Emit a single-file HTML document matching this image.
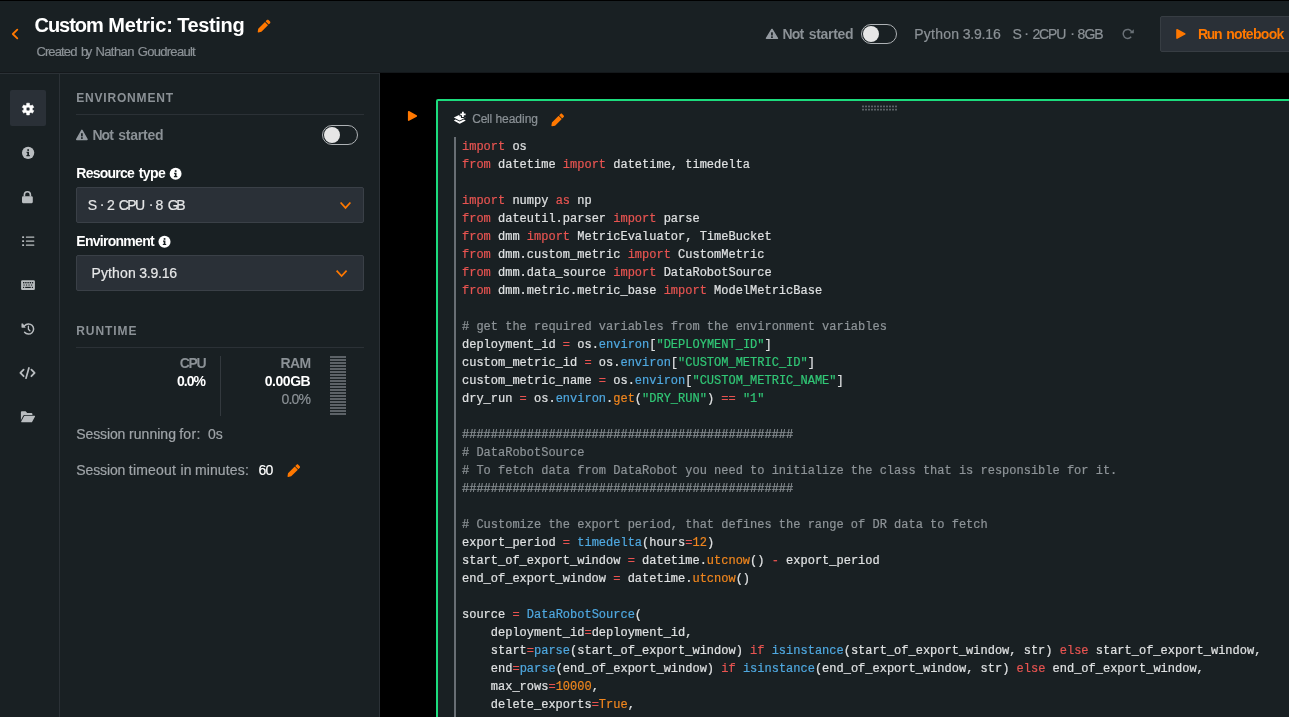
<!DOCTYPE html>
<html><head><meta charset="utf-8"><title>Custom Metric: Testing</title>
<style>
html,body{margin:0;padding:0;}
body{width:1289px;height:717px;overflow:hidden;background:#000;position:relative;font-family:"Liberation Sans", sans-serif;}
.abs{position:absolute;}
.t{position:absolute;white-space:pre;font-family:"Liberation Sans", sans-serif;}
#hdr{left:0;top:0;width:1289px;height:72px;background:#192023;border-top:1px solid #000;box-sizing:border-box;}
#hdrline{left:0;top:72px;width:1289px;height:1px;background:#14181b;}
#side{left:0;top:73px;width:380px;height:644px;background:#192023;border-top:1px solid #2b3136;border-right:1px solid #2b3136;box-sizing:border-box;}
#rail{left:59px;top:73px;width:1px;height:644px;background:#2b3136;}
#active{left:10px;top:90px;width:36px;height:36px;background:#2a3037;border-radius:2px;}
.hr{height:1px;background:#2b3136;left:76px;width:288px;}
.sel{left:76px;width:288px;height:36px;background:#2a3037;border:1px solid #3a4047;border-radius:2px;box-sizing:border-box;}
.tog{width:36px;height:20px;border:1px solid #aeb2b5;border-radius:10px;box-sizing:border-box;}
.tog i{position:absolute;left:1px;top:1px;width:16px;height:16px;border-radius:8px;background:#e6e6e6;}
#runbtn{left:1160px;top:16px;width:140px;height:36px;background:#2a3037;border:1px solid #373d43;border-radius:2px;box-sizing:border-box;}
#cell{left:436px;top:99px;width:900px;height:700px;background:#192023;border:2px solid #1cdc7d;border-radius:2px;box-sizing:border-box;}
#gut{left:454px;top:137px;width:2px;height:600px;background:#686e74;}
#code{left:462px;top:138px;-webkit-text-stroke:0.2px;font-family:"Liberation Mono", monospace;font-size:12px;line-height:18px;color:#dfe1e2;}
.ln{height:18px;white-space:pre;}
.k{color:#e85451;} .s{color:#31c776;} .b{color:#4fa8e0;} .o{color:#f0861e;} .c{color:#8e9498;}
#bars{left:330px;top:356px;width:16px;height:59px;background:repeating-linear-gradient(to bottom,#5c6267 0,#5c6267 2px,transparent 2px,transparent 3px);}
#vsep{left:220px;top:356px;width:1px;height:60px;background:#33393e;}
svg{position:absolute;overflow:visible;}
#wrap{position:absolute;left:0;top:0;width:1289px;height:717px;will-change:transform;}
</style></head><body><div id="wrap">
<div id="hdr" class="abs"></div>
<div id="hdrline" class="abs"></div>
<div id="side" class="abs"></div>
<div id="rail" class="abs"></div>
<div id="active" class="abs"></div>
<div class="abs hr" style="top:114px"></div>
<div class="abs hr" style="top:347px"></div>
<div class="abs sel" style="top:187px"></div>
<div class="abs sel" style="top:255px"></div>
<div class="abs tog" style="left:322px;top:125px"><i></i></div>
<div class="abs tog" style="left:860.5px;top:24px"><i></i></div>
<div id="runbtn" class="abs"></div>
<div id="vsep" class="abs"></div>
<div id="bars" class="abs"></div>
<div id="cell" class="abs"></div>
<div id="gut" class="abs"></div>
<div id="code" class="abs">
<div class="ln"><span class="k">import</span> os</div>
<div class="ln"><span class="k">from</span> datetime <span class="k">import</span> datetime, timedelta</div>
<div class="ln">&nbsp;</div>
<div class="ln"><span class="k">import</span> numpy <span class="k">as</span> np</div>
<div class="ln"><span class="k">from</span> dateutil.parser <span class="k">import</span> parse</div>
<div class="ln"><span class="k">from</span> dmm <span class="k">import</span> MetricEvaluator, TimeBucket</div>
<div class="ln"><span class="k">from</span> dmm.custom_metric <span class="k">import</span> CustomMetric</div>
<div class="ln"><span class="k">from</span> dmm.data_source <span class="k">import</span> DataRobotSource</div>
<div class="ln"><span class="k">from</span> dmm.metric.metric_base <span class="k">import</span> ModelMetricBase</div>
<div class="ln">&nbsp;</div>
<div class="ln"><span class="c"># get the required variables from the environment variables</span></div>
<div class="ln">deployment_id <span class="k">=</span> os.<span class="b">environ</span>[<span class="s">&quot;DEPLOYMENT_ID&quot;</span>]</div>
<div class="ln">custom_metric_id <span class="k">=</span> os.<span class="b">environ</span>[<span class="s">&quot;CUSTOM_METRIC_ID&quot;</span>]</div>
<div class="ln">custom_metric_name <span class="k">=</span> os.<span class="b">environ</span>[<span class="s">&quot;CUSTOM_METRIC_NAME&quot;</span>]</div>
<div class="ln">dry_run <span class="k">=</span> os.<span class="b">environ</span>.<span class="o">get</span>(<span class="s">&quot;DRY_RUN&quot;</span>) <span class="k">==</span> <span class="s">&quot;1&quot;</span></div>
<div class="ln">&nbsp;</div>
<div class="ln"><span class="c">##############################################</span></div>
<div class="ln"><span class="c"># DataRobotSource</span></div>
<div class="ln"><span class="c"># To fetch data from DataRobot you need to initialize the class that is responsible for it.</span></div>
<div class="ln"><span class="c">##############################################</span></div>
<div class="ln">&nbsp;</div>
<div class="ln"><span class="c"># Customize the export period, that defines the range of DR data to fetch</span></div>
<div class="ln">export_period <span class="k">=</span> <span class="b">timedelta</span>(hours<span class="k">=</span><span class="o">12</span>)</div>
<div class="ln">start_of_export_window <span class="k">=</span> datetime.<span class="o">utcnow</span>() <span class="k">-</span> export_period</div>
<div class="ln">end_of_export_window <span class="k">=</span> datetime.<span class="o">utcnow</span>()</div>
<div class="ln">&nbsp;</div>
<div class="ln">source <span class="k">=</span> <span class="b">DataRobotSource</span>(</div>
<div class="ln">    deployment_id<span class="k">=</span>deployment_id,</div>
<div class="ln">    start<span class="k">=</span><span class="b">parse</span>(start_of_export_window) <span class="k">if</span> <span class="b">isinstance</span>(start_of_export_window, str) <span class="k">else</span> start_of_export_window,</div>
<div class="ln">    end<span class="k">=</span><span class="b">parse</span>(end_of_export_window) <span class="k">if</span> <span class="b">isinstance</span>(end_of_export_window, str) <span class="k">else</span> end_of_export_window,</div>
<div class="ln">    max_rows<span class="k">=</span><span class="o">10000</span>,</div>
<div class="ln">    delete_exports<span class="k">=</span><span class="o">True</span>,</div>
<div class="ln">)</div>
<div class="ln">&nbsp;</div>
</div>
<div class="t" style="left:34.50px;top:15px;font-size:20px;line-height:20px;font-weight:bold;color:#ffffff;letter-spacing:-1.052px;">Custom</div>
<div class="t" style="left:108.30px;top:15px;font-size:20px;line-height:20px;font-weight:bold;color:#ffffff;letter-spacing:-0.168px;">Metric:</div>
<div class="t" style="left:177.20px;top:15px;font-size:20px;line-height:20px;font-weight:bold;color:#ffffff;letter-spacing:-0.369px;">Testing</div>
<div class="t" style="left:36.40px;top:45px;font-size:13px;line-height:13px;font-weight:normal;color:#8b9196;letter-spacing:-0.870px;-webkit-text-stroke:0.2px;">Created</div>
<div class="t" style="left:80.90px;top:45px;font-size:13px;line-height:13px;font-weight:normal;color:#8b9196;letter-spacing:-2.430px;-webkit-text-stroke:0.2px;">by</div>
<div class="t" style="left:95.40px;top:45px;font-size:13px;line-height:13px;font-weight:normal;color:#8b9196;letter-spacing:-0.578px;-webkit-text-stroke:0.2px;">Nathan</div>
<div class="t" style="left:137.80px;top:45px;font-size:13px;line-height:13px;font-weight:normal;color:#8b9196;letter-spacing:-0.712px;-webkit-text-stroke:0.2px;">Goudreault</div>
<div class="t" style="left:782.40px;top:27px;font-size:14px;line-height:14px;font-weight:bold;color:#8b9196;letter-spacing:-0.731px;">Not</div>
<div class="t" style="left:808.70px;top:27px;font-size:14px;line-height:14px;font-weight:bold;color:#8b9196;letter-spacing:-0.305px;">started</div>
<div class="t" style="left:914.30px;top:27px;font-size:14px;line-height:14px;font-weight:normal;color:#8b9196;letter-spacing:0.240px;-webkit-text-stroke:0.2px;">Python</div>
<div class="t" style="left:962.70px;top:27px;font-size:14px;line-height:14px;font-weight:normal;color:#8b9196;letter-spacing:-0.188px;-webkit-text-stroke:0.2px;">3.9.16</div>
<div class="t" style="left:1012.60px;top:27px;font-size:14px;line-height:14px;font-weight:normal;color:#8b9196;letter-spacing:0.000px;-webkit-text-stroke:0.2px;">S</div>
<div class="t" style="left:1024.15px;top:26px;font-size:14px;line-height:14px;font-weight:normal;color:#8b9196;letter-spacing:0.000px;-webkit-text-stroke:0.2px;">·</div>
<div class="t" style="left:1032.40px;top:27px;font-size:14px;line-height:14px;font-weight:normal;color:#8b9196;letter-spacing:-1.111px;-webkit-text-stroke:0.2px;">2CPU</div>
<div class="t" style="left:1070.35px;top:26px;font-size:14px;line-height:14px;font-weight:normal;color:#8b9196;letter-spacing:0.000px;-webkit-text-stroke:0.2px;">·</div>
<div class="t" style="left:1077.60px;top:27px;font-size:14px;line-height:14px;font-weight:normal;color:#8b9196;letter-spacing:-0.988px;-webkit-text-stroke:0.2px;">8GB</div>
<div class="t" style="left:1198.00px;top:27px;font-size:14px;line-height:14px;font-weight:bold;color:#ff7800;letter-spacing:-1.281px;">Run</div>
<div class="t" style="left:1226.20px;top:27px;font-size:14px;line-height:14px;font-weight:bold;color:#ff7800;letter-spacing:-0.701px;">notebook</div>
<div class="t" style="left:76.20px;top:92px;font-size:12px;line-height:12px;font-weight:bold;color:#8b9196;letter-spacing:0.816px;">ENVIRONMENT</div>
<div class="t" style="left:92.40px;top:128px;font-size:14px;line-height:14px;font-weight:bold;color:#8b9196;letter-spacing:-0.931px;">Not</div>
<div class="t" style="left:118.30px;top:128px;font-size:14px;line-height:14px;font-weight:bold;color:#8b9196;letter-spacing:-0.238px;">started</div>
<div class="t" style="left:76.30px;top:166px;font-size:14px;line-height:14px;font-weight:bold;color:#ffffff;letter-spacing:-0.760px;">Resource</div>
<div class="t" style="left:138.80px;top:166px;font-size:14px;line-height:14px;font-weight:bold;color:#ffffff;letter-spacing:-0.600px;">type</div>
<div class="t" style="left:87.75px;top:198px;font-size:14px;line-height:14px;font-weight:normal;color:#e6e7e8;letter-spacing:0.000px;-webkit-text-stroke:0.2px;">S</div>
<div class="t" style="left:99.75px;top:197px;font-size:14px;line-height:14px;font-weight:normal;color:#e6e7e8;letter-spacing:0.000px;-webkit-text-stroke:0.2px;">·</div>
<div class="t" style="left:107.00px;top:198px;font-size:14px;line-height:14px;font-weight:normal;color:#e6e7e8;letter-spacing:0.000px;-webkit-text-stroke:0.2px;">2</div>
<div class="t" style="left:118.70px;top:198px;font-size:14px;line-height:14px;font-weight:normal;color:#e6e7e8;letter-spacing:-1.524px;-webkit-text-stroke:0.2px;">CPU</div>
<div class="t" style="left:148.65px;top:197px;font-size:14px;line-height:14px;font-weight:normal;color:#e6e7e8;letter-spacing:0.000px;-webkit-text-stroke:0.2px;">·</div>
<div class="t" style="left:155.55px;top:198px;font-size:14px;line-height:14px;font-weight:normal;color:#e6e7e8;letter-spacing:0.000px;-webkit-text-stroke:0.2px;">8</div>
<div class="t" style="left:167.70px;top:198px;font-size:14px;line-height:14px;font-weight:normal;color:#e6e7e8;letter-spacing:-2.390px;-webkit-text-stroke:0.2px;">GB</div>
<div class="t" style="left:76.30px;top:234px;font-size:14px;line-height:14px;font-weight:bold;color:#ffffff;letter-spacing:-0.720px;">Environment</div>
<div class="t" style="left:91.40px;top:266px;font-size:14px;line-height:14px;font-weight:normal;color:#e6e7e8;letter-spacing:0.160px;-webkit-text-stroke:0.2px;">Python</div>
<div class="t" style="left:139.30px;top:266px;font-size:14px;line-height:14px;font-weight:normal;color:#e6e7e8;letter-spacing:-0.248px;-webkit-text-stroke:0.2px;">3.9.16</div>
<div class="t" style="left:76.20px;top:325px;font-size:12px;line-height:12px;font-weight:bold;color:#8b9196;letter-spacing:0.940px;">RUNTIME</div>
<div class="t" style="left:179.80px;top:356px;font-size:14px;line-height:14px;font-weight:bold;color:#8b9196;letter-spacing:-1.374px;">CPU</div>
<div class="t" style="left:176.90px;top:374px;font-size:14px;line-height:14px;font-weight:bold;color:#ffffff;letter-spacing:-0.954px;">0.0%</div>
<div class="t" style="left:280.60px;top:356px;font-size:14px;line-height:14px;font-weight:bold;color:#8b9196;letter-spacing:-0.610px;">RAM</div>
<div class="t" style="left:264.80px;top:374px;font-size:14px;line-height:14px;font-weight:bold;color:#ffffff;letter-spacing:-0.468px;">0.00GB</div>
<div class="t" style="left:281.50px;top:392px;font-size:14px;line-height:14px;font-weight:normal;color:#8b9196;letter-spacing:-0.787px;-webkit-text-stroke:0.2px;">0.0%</div>
<div class="t" style="left:76.30px;top:427px;font-size:14px;line-height:14px;font-weight:normal;color:#9fa4a8;letter-spacing:-0.120px;-webkit-text-stroke:0.2px;">Session</div>
<div class="t" style="left:129.00px;top:427px;font-size:14px;line-height:14px;font-weight:normal;color:#9fa4a8;letter-spacing:0.047px;-webkit-text-stroke:0.2px;">running</div>
<div class="t" style="left:179.20px;top:427px;font-size:14px;line-height:14px;font-weight:normal;color:#9fa4a8;letter-spacing:0.287px;-webkit-text-stroke:0.2px;">for:</div>
<div class="t" style="left:208.00px;top:427px;font-size:14px;line-height:14px;font-weight:normal;color:#9fa4a8;letter-spacing:0.014px;-webkit-text-stroke:0.2px;">0s</div>
<div class="t" style="left:76.30px;top:463px;font-size:14px;line-height:14px;font-weight:normal;color:#9fa4a8;letter-spacing:-0.120px;-webkit-text-stroke:0.2px;">Session</div>
<div class="t" style="left:128.80px;top:463px;font-size:14px;line-height:14px;font-weight:normal;color:#9fa4a8;letter-spacing:0.213px;-webkit-text-stroke:0.2px;">timeout</div>
<div class="t" style="left:180.50px;top:463px;font-size:14px;line-height:14px;font-weight:normal;color:#9fa4a8;letter-spacing:0.090px;-webkit-text-stroke:0.2px;">in</div>
<div class="t" style="left:194.90px;top:463px;font-size:14px;line-height:14px;font-weight:normal;color:#9fa4a8;letter-spacing:0.140px;-webkit-text-stroke:0.2px;">minutes:</div>
<div class="t" style="left:258.50px;top:463px;font-size:14px;line-height:14px;font-weight:normal;color:#ffffff;letter-spacing:-0.786px;-webkit-text-stroke:0.2px;">60</div>
<div class="t" style="left:472.20px;top:113px;font-size:12px;line-height:12px;font-weight:normal;color:#8b9196;letter-spacing:-0.202px;-webkit-text-stroke:0.2px;">Cell</div>
<div class="t" style="left:495.40px;top:113px;font-size:12px;line-height:12px;font-weight:normal;color:#8b9196;letter-spacing:-0.023px;-webkit-text-stroke:0.2px;">heading</div>
<svg class="abs" style="left:0;top:0" width="1289" height="717" viewBox="0 0 1289 717">
<g transform="translate(257.7 19.7) scale(0.02480)" fill="#ff7800"><path d="M497.9 142.1l-46.1 46.1c-4.7 4.7-12.3 4.7-17 0l-111-111c-4.7-4.7-4.7-12.3 0-17l46.1-46.1c18.7-18.7 49.1-18.7 67.9 0l60.1 60.1c18.8 18.7 18.8 49.1 0 67.900z"/><path d="M284.2 99.8L21.6 362.4 .4 483.9c-2.9 16.4 11.4 30.600 27.800 27.800l121.500-21.300 262.600-262.600c4.700-4.700 4.700-12.300 0-17l-111-111c-4.800-4.700-12.400-4.700-17.100 0z"/></g>
<g transform="translate(287.5 464.3) scale(0.02461)" fill="#ff7800"><path d="M497.9 142.1l-46.1 46.1c-4.7 4.7-12.3 4.7-17 0l-111-111c-4.7-4.7-4.7-12.3 0-17l46.1-46.1c18.7-18.7 49.1-18.7 67.9 0l60.1 60.1c18.8 18.7 18.8 49.1 0 67.900z"/><path d="M284.2 99.8L21.6 362.4 .4 483.9c-2.9 16.4 11.4 30.600 27.800 27.800l121.500-21.300 262.600-262.600c4.700-4.700 4.700-12.300 0-17l-111-111c-4.800-4.700-12.400-4.700-17.100 0z"/></g>
<g transform="translate(551.4 113.6) scale(0.02461)" fill="#ff7800"><path d="M497.9 142.1l-46.1 46.1c-4.7 4.7-12.3 4.7-17 0l-111-111c-4.7-4.7-4.7-12.3 0-17l46.1-46.1c18.7-18.7 49.1-18.7 67.9 0l60.1 60.1c18.8 18.7 18.8 49.1 0 67.900z"/><path d="M284.2 99.8L21.6 362.4 .4 483.9c-2.9 16.4 11.4 30.600 27.800 27.800l121.500-21.300 262.600-262.600c4.700-4.700 4.700-12.300 0-17l-111-111c-4.800-4.700-12.400-4.700-17.100 0z"/></g>
<path d="M17.3 29.6 L12.8 34 L17.3 38.4" fill="none" stroke="#ff7800" stroke-width="1.8" stroke-linecap="round" stroke-linejoin="round"/>
<path d="M771.95 29.5 L777.4000000000001 38.300000000000004 L766.5 38.300000000000004 Z" fill="#949aa0" stroke="#949aa0" stroke-width="1.6" stroke-linejoin="round"/>
<rect x="771.1" y="32.3" width="1.7" height="3.2" fill="#192023"/>
<rect x="771.1" y="36.3" width="1.7" height="1.7" fill="#192023"/>
<path d="M81.9 130.4 L87.0 139.39999999999998 L76.8 139.39999999999998 Z" fill="#949aa0" stroke="#949aa0" stroke-width="1.6" stroke-linejoin="round"/>
<rect x="81.05000000000001" y="133.2" width="1.7" height="3.2" fill="#192023"/>
<rect x="81.05000000000001" y="137.2" width="1.7" height="1.7" fill="#192023"/>
<path d="M1131.67 31.79 A4.5 4.5 0 1 0 1131.15 36.79" fill="none" stroke="#697076" stroke-width="1.5"/>
<path d="M1133.8 29.2 V33.2 H1129.6 Z" fill="#697076"/>
<path d="M1177.0 29.7 L1184.8000000000002 33.9 L1177.0 38.1 Z" fill="#ff7800" stroke="#ff7800" stroke-width="1.6" stroke-linejoin="round"/>
<path d="M408.7 111.80000000000001 L416.29999999999995 115.95 L408.7 120.1 Z" fill="#ff7800" stroke="#ff7800" stroke-width="1.6" stroke-linejoin="round"/>
<path d="M26.72 104.96 L26.68 103.21 L29.42 103.21 L29.38 104.96 L30.93 105.85 L32.42 104.94 L33.79 107.32 L32.26 108.16 L32.26 109.94 L33.79 110.78 L32.42 113.16 L30.93 112.25 L29.38 113.14 L29.42 114.89 L26.68 114.89 L26.72 113.14 L25.17 112.25 L23.68 113.16 L22.31 110.78 L23.84 109.94 L23.84 108.16 L22.31 107.32 L23.68 104.94 L25.17 105.85 Z M26.05 109.05 a2.0 2.0 0 1 0 4.0 0 a2.0 2.0 0 1 0 -4.0 0 Z" fill="#ffffff" fill-rule="evenodd" stroke="#ffffff" stroke-width="0.6" stroke-linejoin="round"/>
<circle cx="28.1" cy="152.8" r="6.15" fill="#b9bdc0"/>
<rect x="27.3" y="149.20000000000002" width="1.7" height="1.7" fill="#192023"/>
<path d="M26.6 151.70000000000002 H29.0 V155.0 H29.8 V156.20000000000002 H26.400000000000002 V155.0 H27.3 V152.9 H26.6 Z" fill="#192023"/>
<circle cx="175.6" cy="173.8" r="5.95" fill="#ffffff"/>
<rect x="174.79999999999998" y="170.20000000000002" width="1.7" height="1.7" fill="#192023"/>
<path d="M174.1 172.70000000000002 H176.5 V176.0 H177.29999999999998 V177.20000000000002 H173.9 V176.0 H174.79999999999998 V173.9 H174.1 Z" fill="#192023"/>
<circle cx="164.5" cy="241.7" r="6.05" fill="#ffffff"/>
<rect x="163.7" y="238.1" width="1.7" height="1.7" fill="#192023"/>
<path d="M163.0 240.6 H165.4 V243.89999999999998 H166.2 V245.1 H162.8 V243.89999999999998 H163.7 V241.79999999999998 H163.0 Z" fill="#192023"/>
<rect x="22.0" y="196.3" width="10.8" height="6.9" rx="1.1" fill="#b9bdc0"/>
<path d="M24.4 196.6 V194.8 A3 3 0 0 1 30.4 194.8 V196.6" fill="none" stroke="#b9bdc0" stroke-width="1.6"/>
<rect x="22.1" y="236.2" width="2.0" height="1.8" rx="0.6" fill="#b9bdc0"/>
<rect x="25.9" y="236.4" width="8.4" height="1.4" rx="0.4" fill="#b9bdc0"/>
<rect x="22.1" y="240.2" width="2.0" height="1.8" rx="0.6" fill="#b9bdc0"/>
<rect x="25.9" y="240.4" width="8.4" height="1.4" rx="0.4" fill="#b9bdc0"/>
<rect x="22.1" y="244.2" width="2.0" height="1.8" rx="0.6" fill="#b9bdc0"/>
<rect x="25.9" y="244.4" width="8.4" height="1.4" rx="0.4" fill="#b9bdc0"/>
<rect x="21.1" y="280.3" width="13.8" height="9.6" rx="1.2" fill="#b9bdc0"/>
<rect x="23.0" y="282.0" width="1.4" height="1.4" fill="#192023"/>
<rect x="25.2" y="282.0" width="1.4" height="1.4" fill="#192023"/>
<rect x="27.4" y="282.0" width="1.4" height="1.4" fill="#192023"/>
<rect x="29.6" y="282.0" width="1.4" height="1.4" fill="#192023"/>
<rect x="31.8" y="282.0" width="1.4" height="1.4" fill="#192023"/>
<rect x="23.4" y="284.4" width="1.3" height="1.3" fill="#192023" opacity="0.8"/>
<rect x="25.9" y="284.4" width="1.3" height="1.3" fill="#192023" opacity="0.8"/>
<rect x="28.4" y="284.4" width="1.3" height="1.3" fill="#192023" opacity="0.8"/>
<rect x="30.9" y="284.4" width="1.3" height="1.3" fill="#192023" opacity="0.8"/>
<rect x="23.0" y="286.8" width="1.2" height="1.2" fill="#192023"/>
<rect x="25.2" y="286.8" width="5.6" height="1.2" fill="#192023"/>
<rect x="31.8" y="286.8" width="1.2" height="1.2" fill="#192023"/>
<path d="M24.59 325.72 A5.1 5.1 0 1 1 24.59 332.28" fill="none" stroke="#b9bdc0" stroke-width="1.5" stroke-linecap="round"/>
<path d="M21.7 323.6 H22.9 L25.5 327.6 H21.7 Z" fill="#b9bdc0"/>
<path d="M21.7 323.6 V327.6 H25.6 Z" fill="#b9bdc0"/>
<path d="M28.4 326.2 V329.2 L29.9 330.8" fill="none" stroke="#b9bdc0" stroke-width="1.3" stroke-linecap="round" stroke-linejoin="round"/>
<path d="M23.6 369.6 L20.4 372.9 L23.6 376.2" fill="none" stroke="#b9bdc0" stroke-width="1.8" stroke-linecap="round" stroke-linejoin="round"/>
<path d="M31.4 369.6 L34.6 372.9 L31.4 376.2" fill="none" stroke="#b9bdc0" stroke-width="1.8" stroke-linecap="round" stroke-linejoin="round"/>
<path d="M28.9 367.9 L26.0 378.2" fill="none" stroke="#b9bdc0" stroke-width="1.7" stroke-linecap="round"/>
<path d="M21.9 411.3 H25.6 L27.2 413.0 H31.4 A1 1 0 0 1 32.4 414.0 V414.9 H24.6 A1.6 1.6 0 0 0 23.2 415.8 L20.9 420.2 V412.3 A1 1 0 0 1 21.9 411.300 Z" fill="#b9bdc0"/>
<path d="M24.9 415.8 H34.4 A0.6 0.6 0 0 1 34.9 416.7 L32.2 421.7 A1 1 0 0 1 31.3 422.2 H21.6 A0.5 0.5 0 0 1 21.2 421.5 L23.9 416.400 A1.100 1.100 0 0 1 24.900 415.800 Z" fill="#b9bdc0"/>
<path d="M453.8 117.6 L459.0 114.9 Q459.7 114.6 460.4 114.9 L465.6 117.6 L460.4 120.3 Q459.7 120.6 459.0 120.3 Z" fill="#ffffff"/>
<path d="M453.8 120.5 L455.6 119.6 L459.7 121.5 L463.9 119.6 L465.8 120.5 L460.3 123.6 Q459.7 123.9 459.1 123.6 Z" fill="#ffffff"/>
<path d="M462.9 111.0 V117.9 M459.4 114.4 H466.4" stroke="#192023" stroke-width="3.9" fill="none"/>
<path d="M462.9 111.8 V117.0 M460.3 114.4 H465.6" stroke="#ffffff" stroke-width="1.8" fill="none"/>
<rect x="862" y="105.6" width="2" height="1.7" fill="#5b6166"/>
<rect x="862" y="108.8" width="2" height="1.7" fill="#5b6166"/>
<rect x="865" y="105.6" width="2" height="1.7" fill="#5b6166"/>
<rect x="865" y="108.8" width="2" height="1.7" fill="#5b6166"/>
<rect x="868" y="105.6" width="2" height="1.7" fill="#5b6166"/>
<rect x="868" y="108.8" width="2" height="1.7" fill="#5b6166"/>
<rect x="871" y="105.6" width="2" height="1.7" fill="#5b6166"/>
<rect x="871" y="108.8" width="2" height="1.7" fill="#5b6166"/>
<rect x="874" y="105.6" width="2" height="1.7" fill="#5b6166"/>
<rect x="874" y="108.8" width="2" height="1.7" fill="#5b6166"/>
<rect x="877" y="105.6" width="2" height="1.7" fill="#5b6166"/>
<rect x="877" y="108.8" width="2" height="1.7" fill="#5b6166"/>
<rect x="880" y="105.6" width="2" height="1.7" fill="#5b6166"/>
<rect x="880" y="108.8" width="2" height="1.7" fill="#5b6166"/>
<rect x="883" y="105.6" width="2" height="1.7" fill="#5b6166"/>
<rect x="883" y="108.8" width="2" height="1.7" fill="#5b6166"/>
<rect x="886" y="105.6" width="2" height="1.7" fill="#5b6166"/>
<rect x="886" y="108.8" width="2" height="1.7" fill="#5b6166"/>
<rect x="889" y="105.6" width="2" height="1.7" fill="#5b6166"/>
<rect x="889" y="108.8" width="2" height="1.7" fill="#5b6166"/>
<rect x="892" y="105.6" width="2" height="1.7" fill="#5b6166"/>
<rect x="892" y="108.8" width="2" height="1.7" fill="#5b6166"/>
<rect x="895" y="105.6" width="2" height="1.7" fill="#5b6166"/>
<rect x="895" y="108.8" width="2" height="1.7" fill="#5b6166"/>
<path d="M340.6 202.5 L345.5 207.9 L350.4 202.5" fill="none" stroke="#ff7800" stroke-width="1.7" stroke-linecap="butt" stroke-linejoin="miter"/>
<path d="M336.6 270.6 L341.6 276.0 L346.59999999999997 270.6" fill="none" stroke="#ff7800" stroke-width="1.7" stroke-linecap="butt" stroke-linejoin="miter"/>
</svg>

</div></body></html>
